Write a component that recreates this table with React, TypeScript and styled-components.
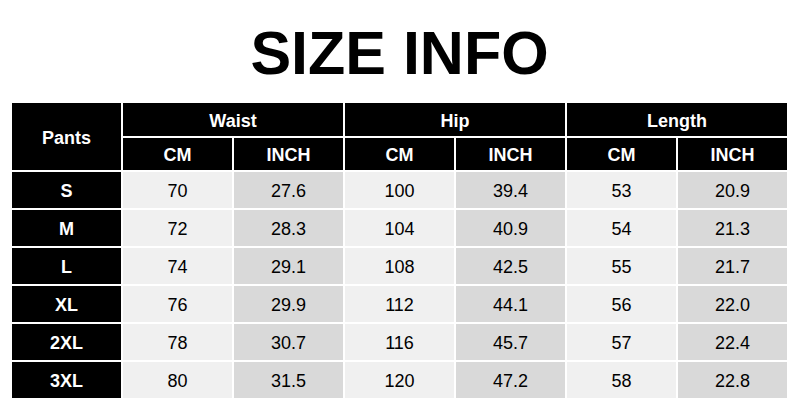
import React from "react";
import styled, { createGlobalStyle } from "styled-components";

const GlobalStyle = createGlobalStyle`
  html, body {
    margin: 0;
    padding: 0;
    background: #fff;
    font-family: "Liberation Sans", Arial, sans-serif;
  }
`;

const rows = [
  { size: "S", w: ["70", "27.6"], h: ["100", "39.4"], l: ["53", "20.9"] },
  { size: "M", w: ["72", "28.3"], h: ["104", "40.9"], l: ["54", "21.3"] },
  { size: "L", w: ["74", "29.1"], h: ["108", "42.5"], l: ["55", "21.7"] },
  { size: "XL", w: ["76", "29.9"], h: ["112", "44.1"], l: ["56", "22.0"] },
  { size: "2XL", w: ["78", "30.7"], h: ["116", "45.7"], l: ["57", "22.4"] },
  { size: "3XL", w: ["80", "31.5"], h: ["120", "47.2"], l: ["58", "22.8"] },
];

const groups = ["Waist", "Hip", "Length"];

const App = () => {
  return (
    <Page>
      <GlobalStyle />
      <Title>SIZE INFO</Title>
      <Table>
        <HeadCell $rowSpan={2}>Pants</HeadCell>
        {groups.map((g) => (
          <HeadCell key={g} $colSpan={2}>
            {g}
          </HeadCell>
        ))}
        {groups.map((g) => (
          <React.Fragment key={g + "-units"}>
            <HeadCell>CM</HeadCell>
            <HeadCell>INCH</HeadCell>
          </React.Fragment>
        ))}
        {rows.map((r) => (
          <React.Fragment key={r.size}>
            <HeadCell>{r.size}</HeadCell>
            {[r.w, r.h, r.l].map((pair, i) => (
              <React.Fragment key={i}>
                <Cell $shade="light">{pair[0]}</Cell>
                <Cell $shade="dark">{pair[1]}</Cell>
              </React.Fragment>
            ))}
          </React.Fragment>
        ))}
      </Table>
    </Page>
  );
};

export default App;

const Page = styled.div`
  width: 800px;
  height: 410px;
  padding: 23px 0 0 12px;
  box-sizing: border-box;
  overflow: hidden;
`;

const Title = styled.h1`
  margin: 0 0 19px;
  width: 775px;
  text-align: center;
  font-size: 61px;
  line-height: 61px;
  font-weight: 700;
  color: #000;
`;

const Table = styled.div`
  width: 775px;
  display: grid;
  grid-template-columns: repeat(7, 1fr);
  grid-template-rows: 33px 32px repeat(6, 36px);
  gap: 2px;
`;

const HeadCell = styled.div<{ $rowSpan?: number; $colSpan?: number }>`
  background: #000;
  color: #fff;
  font-weight: 700;
  font-size: 18px;
  display: flex;
  align-items: center;
  justify-content: center;
  padding-top: 3px;
  grid-row: ${(p) => (p.$rowSpan ? `span ${p.$rowSpan}` : "auto")};
  grid-column: ${(p) => (p.$colSpan ? `span ${p.$colSpan}` : "auto")};
`;

const Cell = styled.div<{ $shade: "light" | "dark" }>`
  background: ${(p) => (p.$shade === "light" ? "#f0f0f0" : "#d9d9d9")};
  color: #000;
  font-size: 18px;
  display: flex;
  align-items: center;
  justify-content: center;
  padding-top: 3px;
`;
